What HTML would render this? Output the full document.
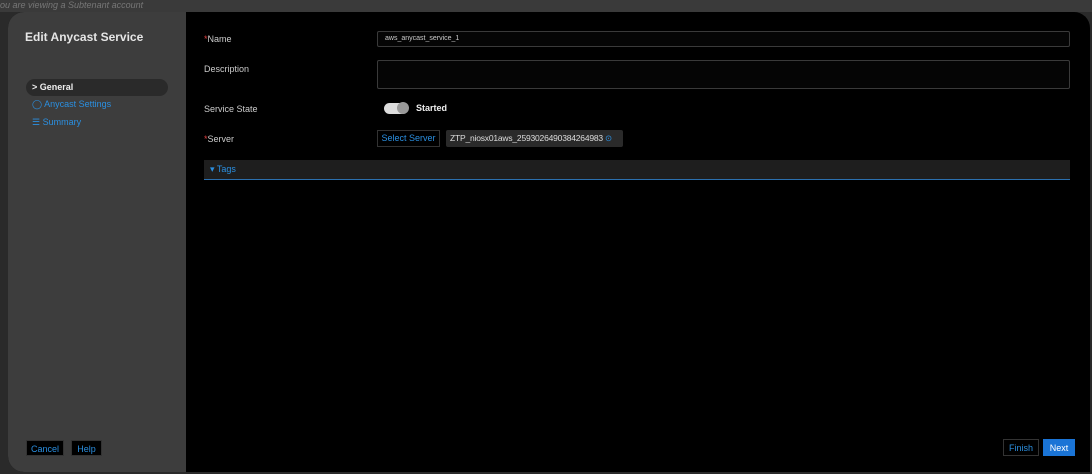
<!DOCTYPE html>
<html><head><style>
*{box-sizing:border-box;margin:0;padding:0}
body{width:1092px;height:474px;background:#2a2a2a;font-family:"Liberation Sans",sans-serif;position:relative;overflow:hidden}
.top{position:absolute;left:0;top:0;width:1092px;height:12px;background:#3a3a3a;color:#777;font-size:9px;font-style:italic;line-height:11px;padding-left:0}
.modal{position:absolute;left:8px;top:12px;width:1082px;height:460px;border-radius:16px 16px 0 16px;overflow:hidden;background:#000}
.side{position:absolute;left:0;top:0;width:178px;height:460px;background:#3d3d3d}
.side h1{position:absolute;left:17px;top:18px;font-size:12px;color:#e6e6e6;font-weight:bold}
.nav{position:absolute;left:18px;height:17px;font-size:9px;line-height:17px;padding-left:6px;white-space:nowrap}
.btn{position:absolute;height:16px;font-size:9px;line-height:16px;text-align:center;color:#2b8fe0;background:#000;border:1px solid #333;white-space:nowrap}
.lbl{position:absolute;left:196px;font-size:9px;color:#ccc}
.lbl b{color:#e04040;font-weight:normal}
.inp{position:absolute;left:369px;width:693px;border:1px solid #3a3a3a;border-radius:2px;background:#050505}
</style></head><body>
<div class="top">ou are viewing a Subtenant account</div>
<div class="modal">
<div class="side">
<h1>Edit Anycast Service</h1>
<div class="nav" style="top:67px;width:142px;background:#2a2a2a;border-radius:9px;color:#eee;font-weight:bold">&gt; General</div>
<div class="nav" style="top:84px;color:#2b8fe0">◯ Anycast Settings</div>
<div class="nav" style="top:102px;color:#2b8fe0">☰ Summary</div>
<div class="btn" style="left:18px;top:428px;width:38px">Cancel</div>
<div class="btn" style="left:63px;top:428px;width:31px">Help</div>
</div>
<div class="lbl" style="top:22px"><b>*</b>Name</div>
<div class="inp" style="top:19px;height:16px;font-size:7px;color:#ccc;line-height:14px;padding-left:7px">aws_anycast_service_1</div>
<div class="lbl" style="top:52px">Description</div>
<div class="inp" style="top:48px;height:29px"></div>
<div class="lbl" style="top:92px">Service State</div>
<div style="position:absolute;left:376px;top:91px;width:24px;height:11px;border-radius:6px;background:#ddd"></div>
<div style="position:absolute;left:389px;top:90px;width:12px;height:12px;border-radius:6px;background:#999"></div>
<div class="lbl" style="left:408px;top:91px;color:#eee;font-weight:bold">Started</div>
<div class="lbl" style="top:122px"><b>*</b>Server</div>
<div class="btn" style="left:369px;top:118px;width:63px;height:17px;line-height:15px">Select Server</div>
<div style="position:absolute;left:438px;top:118px;width:177px;height:17px;background:#2a2a2a;border-radius:2px;color:#ddd;font-size:8.5px;line-height:17px;padding-left:4px;white-space:nowrap;overflow:hidden;letter-spacing:-0.2px">ZTP_niosx01aws_2593026490384264983<span style="color:#2b8fe0;margin-left:2px">⊙</span></div>
<div style="position:absolute;left:196px;top:148px;width:866px;height:20px;background:#1e1e1e;border-bottom:1px solid #2b6fae;color:#2b8fe0;font-size:9px;line-height:19px;padding-left:6px">▾ Tags</div>
<div class="btn" style="left:995px;top:427px;width:36px;height:17px">Finish</div>
<div class="btn" style="left:1035px;top:427px;width:32px;height:17px;background:#1a74d6;color:#fff;border-color:#1a74d6">Next</div>
</div>
</body></html>
